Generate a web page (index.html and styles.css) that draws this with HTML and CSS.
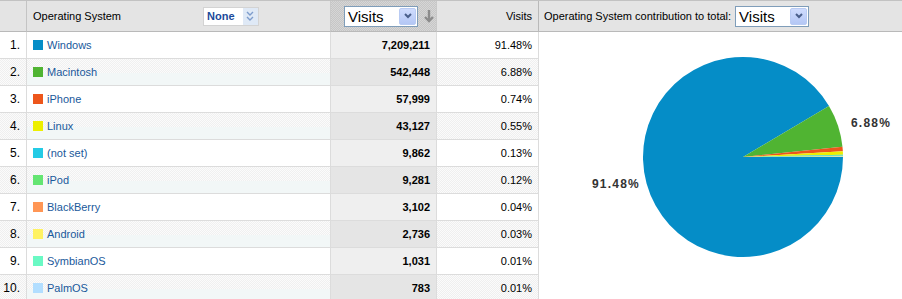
FILE: index.html
```html
<!DOCTYPE html>
<html lang="en">
<head>
  <meta charset="UTF-8">
  <title>Operating Systems - Visits</title>
  <link rel="stylesheet" href="styles.css">
</head>
<body>
  <div class="report">
    <table class="grid">
      <colgroup>
        <col class="c-idx">
        <col class="c-dim">
        <col class="c-metric">
        <col class="c-pct">
      </colgroup>
      <thead>
        <tr>
          <th class="idx"></th>
          <th class="dim">
            <div class="dim-head">
              <span class="dim-label">Operating System</span>
              <span class="pivot">None<span class="pivot-arrow">
                <svg viewBox="0 0 10 12" width="10" height="12"><polyline points="2,2 5,5 8,2" fill="none" stroke="#7d9ccc" stroke-width="1.4"/><polyline points="2,7 5,10 8,7" fill="none" stroke="#7d9ccc" stroke-width="1.4"/></svg>
              </span></span>
            </div>
          </th>
          <th class="metric sorted">
            <div class="metric-head">
              <span class="select">Visits<span class="select-btn">
                <svg viewBox="0 0 10 8" width="10" height="8"><polyline points="2,2 5,5 8,2" fill="none" stroke="#4a5f8a" stroke-width="2"/></svg>
              </span></span>
              <svg class="sort-arrow" viewBox="0 0 10 14" width="10" height="14"><line x1="5" y1="1" x2="5" y2="12" stroke="#8c8c8c" stroke-width="2.4"/><polyline points="1,8 5,12 9,8" fill="none" stroke="#8c8c8c" stroke-width="2.4"/></svg>
            </div>
          </th>
          <th class="pct">Visits</th>
        </tr>
      </thead>
      <tbody>
        <tr><td class="idx">1.</td><td class="dim"><span class="swatch" style="background:#058dc7"></span><a href="#">Windows</a></td><td class="metric">7,209,211</td><td class="pct">91.48%</td></tr>
        <tr class="alt"><td class="idx">2.</td><td class="dim"><span class="swatch" style="background:#50b432"></span><a href="#">Macintosh</a></td><td class="metric">542,448</td><td class="pct">6.88%</td></tr>
        <tr><td class="idx">3.</td><td class="dim"><span class="swatch" style="background:#ed561b"></span><a href="#">iPhone</a></td><td class="metric">57,999</td><td class="pct">0.74%</td></tr>
        <tr class="alt"><td class="idx">4.</td><td class="dim"><span class="swatch" style="background:#edef00"></span><a href="#">Linux</a></td><td class="metric">43,127</td><td class="pct">0.55%</td></tr>
        <tr><td class="idx">5.</td><td class="dim"><span class="swatch" style="background:#24cbe5"></span><a href="#">(not set)</a></td><td class="metric">9,862</td><td class="pct">0.13%</td></tr>
        <tr class="alt"><td class="idx">6.</td><td class="dim"><span class="swatch" style="background:#64e572"></span><a href="#">iPod</a></td><td class="metric">9,281</td><td class="pct">0.12%</td></tr>
        <tr><td class="idx">7.</td><td class="dim"><span class="swatch" style="background:#ff9655"></span><a href="#">BlackBerry</a></td><td class="metric">3,102</td><td class="pct">0.04%</td></tr>
        <tr class="alt"><td class="idx">8.</td><td class="dim"><span class="swatch" style="background:#fff263"></span><a href="#">Android</a></td><td class="metric">2,736</td><td class="pct">0.03%</td></tr>
        <tr><td class="idx">9.</td><td class="dim"><span class="swatch" style="background:#6af9c4"></span><a href="#">SymbianOS</a></td><td class="metric">1,031</td><td class="pct">0.01%</td></tr>
        <tr class="alt"><td class="idx">10.</td><td class="dim"><span class="swatch" style="background:#b2deff"></span><a href="#">PalmOS</a></td><td class="metric">783</td><td class="pct">0.01%</td></tr>
      </tbody>
    </table>

    <div class="chart">
      <div class="chart-head">
        <span class="chart-label">Operating System contribution to total:</span>
        <span class="select">Visits<span class="select-btn">
          <svg viewBox="0 0 10 8" width="10" height="8"><polyline points="2,2 5,5 8,2" fill="none" stroke="#4a5f8a" stroke-width="2"/></svg>
        </span></span>
      </div>
      <div class="chart-body">
        <svg class="pie" viewBox="0 0 363 267" width="363" height="267">
          <path d="M204,125 L304,125 A100,100 0 1 1 290.01,73.98 Z" fill="#058dc7"/>
          <path d="M204,125 L290.01,73.98 A100,100 0 0 1 303.47,114.72 Z" fill="#50b432"/>
          <path d="M204,125 L303.47,114.72 A100,100 0 0 1 303.84,119.35 Z" fill="#ed561b"/>
          <path d="M204,125 L303.84,119.35 A100,100 0 0 1 303.98,122.80 Z" fill="#edef00"/>
          <path d="M204,125 L303.98,122.80 A100,100 0 0 1 303.99,123.62 Z" fill="#24cbe5"/>
          <path d="M204,125 L303.99,123.62 A100,100 0 0 1 304,124.37 Z" fill="#64e572"/>
          <path d="M204,125 L304,124.37 L304,124.62 Z" fill="#ff9655"/>
          <path d="M204,125 L304,124.62 L304,124.81 Z" fill="#fff263"/>
          <path d="M204,125 L304,124.81 L304,124.87 Z" fill="#6af9c4"/>
          <path d="M204,125 L304,124.87 L304,125 Z" fill="#b2deff"/>
          <text class="pie-label" x="312" y="95">6.88%</text>
          <text class="pie-label" x="53" y="156">91.48%</text>
        </svg>
      </div>
    </div>
  </div>
</body>
</html>
```

FILE: styles.css
```css
* {
  margin: 0;
  padding: 0;
  box-sizing: border-box;
}

body {
  font-family: "Liberation Sans", Arial, sans-serif;
  font-size: 11px;
  color: #000;
  background-color: #fff;
}

.report {
  display: flex;
  width: 902px;
  height: 299px;
  overflow: hidden;
}

/* table */

.grid {
  width: 539px;
  flex: none;
  table-layout: fixed;
  border-collapse: separate;
  border-spacing: 0;
  border-top: 1px solid #c2c2c2;
}

.c-idx { width: 27px; }
.c-dim { width: 304px; }
.c-metric { width: 106px; }
.c-pct { width: 102px; }

.grid th {
  height: 31px;
  background-color: #e4e4e4;
  border-bottom: 1px solid #b9b9b9;
  border-right: 1px solid #c9c9c9;
  font-weight: normal;
  text-align: left;
  padding: 0 6px;
  vertical-align: middle;
}

.grid td {
  height: 27px;
  border-bottom: 1px solid #dcdcdc;
  border-right: 1px solid #dcdcdc;
  padding: 0 6px;
  vertical-align: middle;
  white-space: nowrap;
  background-color: #fff;
}

.grid .idx {
  text-align: right;
  font-size: 12px;
  padding: 0 6px 0 0;
}

.grid th.idx {
  border-right-color: #c4c4c4;
}

.dim-head {
  display: flex;
  align-items: center;
}

.dim-label {
  width: 170px;
  font-size: 11px;
}

.pivot {
  display: inline-flex;
  align-items: stretch;
  height: 19px;
  background-color: #fff;
  border: 1px solid #d3d3d3;
  color: #1b4a9a;
  font-weight: bold;
  font-size: 11px;
  line-height: 17px;
  padding-left: 3px;
}

.pivot-arrow {
  display: inline-flex;
  align-items: center;
  justify-content: center;
  width: 15px;
  margin-left: 8px;
  background-color: #dfe9f6;
}

.grid th.sorted {
  background-color: #d0d0d0;
  background-image: conic-gradient(#c6c6c6 25%, #d6d6d6 0 50%, #c6c6c6 0 75%, #d6d6d6 0);
  background-size: 2px 2px;
  padding: 0 0 0 13px;
}

.metric-head {
  display: flex;
  align-items: center;
  gap: 6px;
}

.select {
  display: inline-flex;
  align-items: center;
  justify-content: space-between;
  width: 74px;
  height: 21px;
  background-color: #fff;
  border: 1px solid #7f9db9;
  font-size: 15px;
  line-height: 19px;
  padding: 0 1px 0 3px;
  font-weight: normal;
  color: #000;
}

.select-btn {
  display: inline-flex;
  align-items: center;
  justify-content: center;
  width: 17px;
  height: 17px;
  border: 1px solid #b9cbf3;
  border-radius: 2px;
  background: linear-gradient(#cfdcfd, #b4c7f5);
}

.sort-arrow {
  display: block;
}

.grid .metric {
  text-align: right;
  font-weight: bold;
  background-color: #efefef;
}

.grid .pct {
  text-align: right;
}

.grid th.pct {
  border-right-color: #b9b9b9;
}

.dim a {
  color: #19599b;
  text-decoration: none;
}

.swatch {
  display: inline-block;
  width: 10px;
  height: 10px;
  margin-right: 4px;
  vertical-align: -1px;
}

.grid tr.alt td {
  background-color: #f8f8f8;
  background-image: conic-gradient(#efefef 25%, #fbfbfb 0 50%, #efefef 0 75%, #fbfbfb 0);
  background-size: 2px 2px;
}

.grid tr.alt td.dim {
  background-image: linear-gradient(to bottom, transparent 55%, #f2f7f7 55%), conic-gradient(#f0f0f0 25%, #fbfbfb 0 50%, #f0f0f0 0 75%, #fbfbfb 0);
  background-size: 100% 100%, 2px 2px;
}

.grid tr.alt td.metric {
  background: #e5e5e5;
}

/* chart */

.chart {
  flex: 1;
  display: flex;
  flex-direction: column;
}

.chart-head {
  display: flex;
  align-items: center;
  height: 32px;
  background-color: #e4e4e4;
  border-top: 1px solid #c2c2c2;
  border-bottom: 1px solid #b9b9b9;
  padding: 0 5px;
  gap: 4px;
}

.chart-label {
  font-size: 11px;
}

.chart-body {
  flex: 1;
}

.pie {
  display: block;
}

.pie-label {
  font-family: "Liberation Sans", Arial, sans-serif;
  font-size: 12px;
  font-weight: bold;
  letter-spacing: 1.2px;
  fill: #333;
}
```
